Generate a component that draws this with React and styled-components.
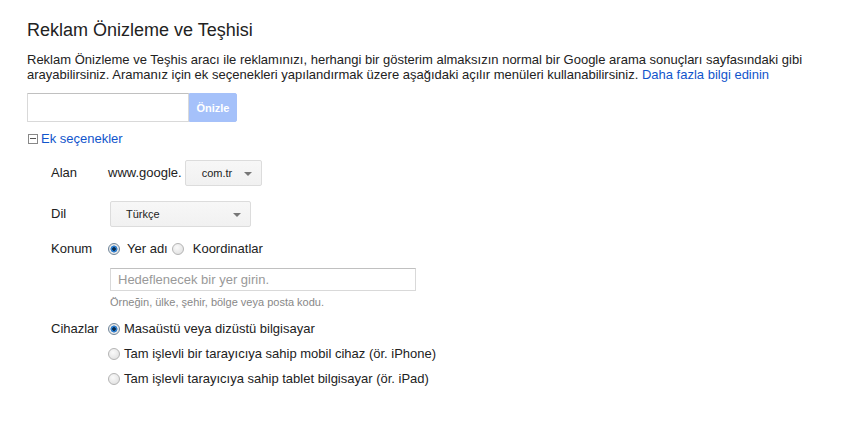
import React from "react";
import styled, { createGlobalStyle } from "styled-components";

const GlobalStyle = createGlobalStyle`
  body {
    margin: 0;
    background: #fff;
    font-family: Arial, "Liberation Sans", sans-serif;
    color: #222;
  }
`;

const Page = styled.div`
  padding: 19px 27px 40px;
`;

const Title = styled.h1`
  margin: 0;
  font-size: 18px;
  line-height: 22px;
  font-weight: normal;
  color: #222;
`;

const Intro = styled.p`
  margin: 11px 0 0;
  font-size: 13px;
  line-height: 15px;
  max-width: 792px;
`;

const Link = styled.a`
  color: #15c;
  text-decoration: none;
  cursor: pointer;
`;

const SearchRow = styled.div`
  display: flex;
  margin-top: 11px;
  height: 29px;
`;

const SearchInput = styled.input`
  box-sizing: border-box;
  width: 162px;
  height: 29px;
  margin: 0;
  border: 1px solid #d9d9d9;
  border-top-color: #c0c0c0;
  border-radius: 1px 0 0 1px;
  outline: none;
`;

const PreviewButton = styled.button`
  box-sizing: border-box;
  width: 48px;
  height: 29px;
  border: 1px solid #a6c1f9;
  border-radius: 0 2px 2px 0;
  background: #a5c1fa;
  color: #fff;
  font-family: Arial, "Liberation Sans", sans-serif;
  font-size: 11px;
  font-weight: bold;
  padding: 0;
`;

const Toggle = styled.div`
  display: flex;
  align-items: center;
  margin-top: 9px;
  font-size: 13px;
  line-height: 15px;
  margin-left: 1px;
`;

const MinusBox = styled.span`
  box-sizing: border-box;
  width: 10px;
  height: 10px;
  border: 1px solid #888;
  margin-right: 3px;
  display: flex;
  align-items: center;
  justify-content: center;

  &::after {
    content: "";
    width: 6px;
    height: 1px;
    background: #555;
  }
`;

const Options = styled.div`
  margin-left: 24px;
  margin-top: 14px;
`;

const Row = styled.div`
  display: flex;
  align-items: ${({ $top }) => ($top ? "flex-start" : "center")};
  margin-top: ${({ $gap }) => $gap || 0}px;
  font-size: 13px;
  line-height: 16px;
`;

const Label = styled.div`
  width: 57px;
  flex-shrink: 0;
`;

const Content = styled.div`
  display: flex;
  flex-direction: ${({ $column }) => ($column ? "column" : "row")};
  align-items: ${({ $column }) => ($column ? "flex-start" : "center")};
  gap: ${({ $gap }) => $gap || 0}px;
  margin-left: ${({ $offset }) => $offset || 0}px;
`;

const Select = styled.div`
  box-sizing: border-box;
  position: relative;
  width: ${({ $width }) => $width}px;
  height: 26px;
  margin-left: ${({ $offset }) => $offset || 0}px;
  border: 1px solid #dcdcdc;
  border-radius: 2px;
  background: linear-gradient(#f7f7f7, #f1f1f1);
  color: #222;
  font-size: 11px;
  line-height: 24px;
  padding-left: ${({ $pad }) => $pad}px;

  &::after {
    content: "";
    position: absolute;
    right: 9px;
    top: 11px;
    border-left: 4px solid transparent;
    border-right: 4px solid transparent;
    border-top: 4px solid #777;
  }
`;

const RadioLabel = styled.label`
  display: flex;
  align-items: center;
  gap: ${({ $gap }) => $gap || 5}px;
  margin-left: ${({ $offset }) => $offset || 0}px;
  color: #222;
`;

const Radio = styled.span`
  box-sizing: border-box;
  width: 12px;
  height: 12px;
  border-radius: 50%;
  border: 1px solid ${({ $checked }) => ($checked ? "#6f8599" : "#b4b4b4")};
  background: ${({ $checked }) =>
    $checked
      ? "radial-gradient(circle, #0a2a4a 0 1.5px, #2d7fd0 2px 3.2px, #e8e8e8 3.8px)"
      : "radial-gradient(circle at 40% 35%, #fafafa, #dcdcdc)"};
  flex-shrink: 0;
`;

const PlaceInput = styled.input`
  box-sizing: border-box;
  width: 306px;
  height: 23px;
  margin: 0;
  padding: 0 7px;
  border: 1px solid #d9d9d9;
  border-top-color: #c0c0c0;
  font-family: Arial, "Liberation Sans", sans-serif;
  font-size: 13px;
  outline: none;

  &::placeholder {
    color: #999;
  }
`;

const Hint = styled.div`
  margin-top: 4px;
  font-size: 11px;
  line-height: 14px;
  color: #888;
`;

const devices = [
  { text: "Masaüstü veya dizüstü bilgisayar", checked: true },
  { text: "Tam işlevli bir tarayıcıya sahip mobil cihaz (ör. iPhone)" },
  { text: "Tam işlevli tarayıcıya sahip tablet bilgisayar (ör. iPad)" },
];

export default function App() {
  return (
    <Page>
      <GlobalStyle />
      <Title>Reklam Önizleme ve Teşhisi</Title>
      <Intro>
        Reklam Önizleme ve Teşhis aracı ile reklamınızı, herhangi bir gösterim
        almaksızın normal bir Google arama sonuçları sayfasındaki gibi
        arayabilirsiniz. Aramanız için ek seçenekleri yapılandırmak üzere
        aşağıdaki açılır menüleri kullanabilirsiniz.{" "}
        <Link>Daha fazla bilgi edinin</Link>
      </Intro>
      <SearchRow>
        <SearchInput />
        <PreviewButton>Önizle</PreviewButton>
      </SearchRow>
      <Toggle>
        <MinusBox />
        <Link>Ek seçenekler</Link>
      </Toggle>
      <Options>
        <Row>
          <Label>Alan</Label>
          <Content $gap={3}>
            <span>www.google.</span>
            <Select $width={77} $pad={16}>com.tr</Select>
          </Content>
        </Row>
        <Row $gap={15}>
          <Label>Dil</Label>
          <Select $width={141} $pad={15} $offset={2}>Türkçe</Select>
        </Row>
        <Row $gap={14}>
          <Label>Konum</Label>
          <Content>
            <RadioLabel $gap={7}>
              <Radio $checked />
              Yer adı
            </RadioLabel>
            <RadioLabel $gap={9} $offset={4}>
              <Radio />
              Koordinatlar
            </RadioLabel>
          </Content>
        </Row>
        <Row $gap={11} $top>
          <Label />
          <Content $column $offset={2}>
            <PlaceInput placeholder="Hedeflenecek bir yer girin." />
            <Hint>Örneğin, ülke, şehir, bölge veya posta kodu.</Hint>
          </Content>
        </Row>
        <Row $gap={12} $top>
          <Label>Cihazlar</Label>
          <Content $column $gap={9}>
            {devices.map((d) => (
              <RadioLabel key={d.text} $gap={4}>
                <Radio $checked={d.checked} />
                {d.text}
              </RadioLabel>
            ))}
          </Content>
        </Row>
      </Options>
    </Page>
  );
}
